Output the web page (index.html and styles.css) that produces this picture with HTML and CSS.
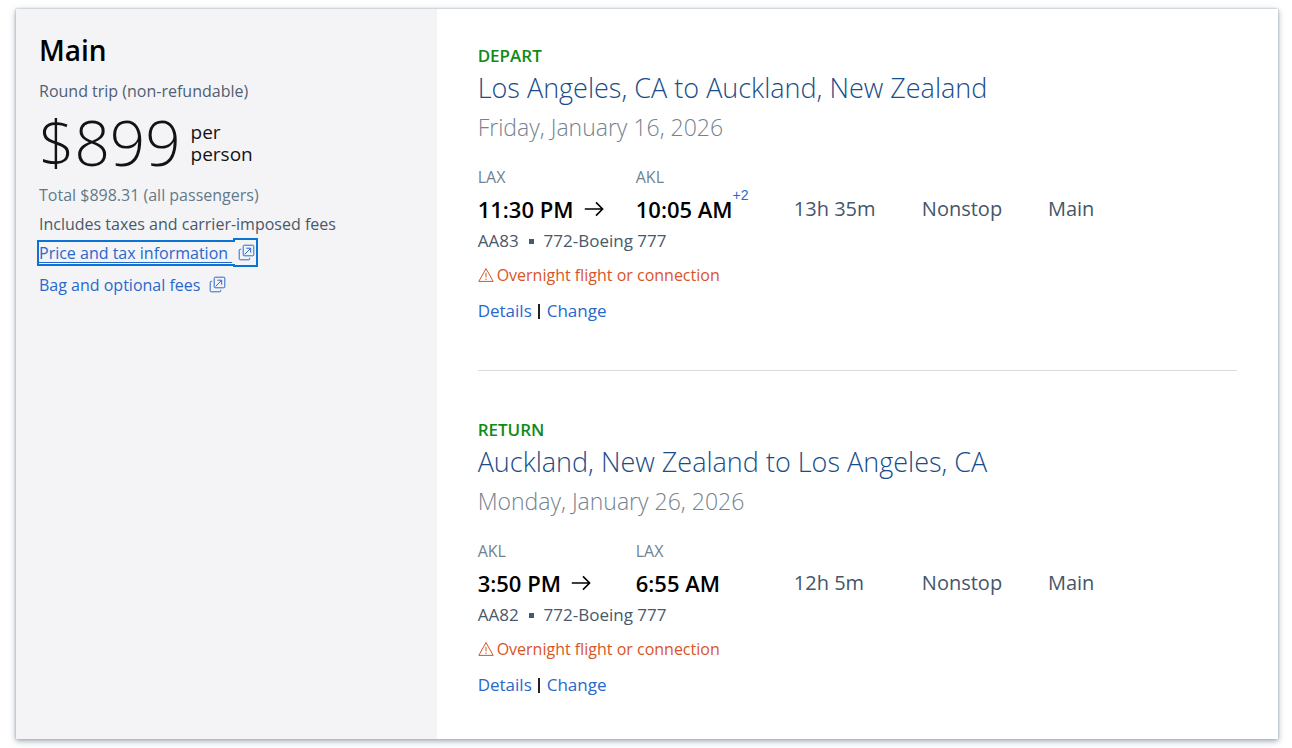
FILE: index.html
```html
<!DOCTYPE html>
<html lang="en">
<head>
<meta charset="utf-8">
<meta name="viewport" content="width=device-width, initial-scale=1">
<title>Trip summary</title>
<link rel="stylesheet" href="styles.css">
</head>
<body>
<svg class="sprite" aria-hidden="true">
  <symbol id="popup" viewBox="0 0 17 17">
    <path d="M6.2 1.2h8.6a1 1 0 0 1 1 1v8.6a1 1 0 0 1-1 1H6.2a1 1 0 0 1-1-1V2.2a1 1 0 0 1 1-1M3.2 5.3H2.2a1 1 0 0 0-1 1v8.5a1 1 0 0 0 1 1h8.5a1 1 0 0 0 1-1v-1M6.6 10.4l6-6M8.3 4.2h4.4v4.5"/>
  </symbol>
  <symbol id="warning" viewBox="0 0 16 16">
    <path d="M8 1.6 15.2 14.4H.8zM8 5.8v4.6M8 11.6v1.4"/>
  </symbol>
  <symbol id="arrow" viewBox="0 0 20 16">
    <path d="M.8 8h17.8M12 1.4 18.6 8 12 14.6"/>
  </symbol>
</svg>
<main class="card">
  <aside class="fare">
    <h1 class="fare-name">Main</h1>
    <p class="fare-type">Round trip (non-refundable)</p>
    <p class="price"><span class="amount">$899</span><span class="unit">per<br>person</span></p>
    <p class="total">Total $898.31 (all passengers)</p>
    <p class="note">Includes taxes and carrier-imposed fees</p>
    <p class="info"><a class="link focused" href="#price"><span class="link-text">Price and tax information&nbsp;</span><svg class="popup"><use href="#popup"/></svg></a></p>
    <p class="info last"><a class="link" href="#bags">Bag and optional fees <svg class="popup"><use href="#popup"/></svg></a></p>
  </aside>
  <div class="slices">
    <section class="slice">
      <p class="direction">DEPART</p>
      <h2 class="route">Los Angeles, CA to Auckland, New Zealand</h2>
      <p class="date">Friday, January 16, 2026</p>
      <div class="flight">
        <div><p class="code">LAX</p><p class="time">11:30 PM<svg class="arrow"><use href="#arrow"/></svg></p></div>
        <div><p class="code">AKL</p><p class="time">10:05 AM<a class="days" href="#days">+2</a></p></div>
        <p class="fact">13h 35m</p>
        <p class="fact">Nonstop</p>
        <p class="fact">Main</p>
      </div>
      <p class="plane">AA83<span class="dot"></span>772-Boeing 777</p>
      <p class="alert"><svg class="warning"><use href="#warning"/></svg>Overnight flight or connection</p>
      <p class="actions"><a class="link" href="#details-1">Details</a><span class="bar"></span><a class="link" href="#change-1">Change</a></p>
    </section>
    <section class="slice">
      <p class="direction">RETURN</p>
      <h2 class="route">Auckland, New Zealand to Los Angeles, CA</h2>
      <p class="date">Monday, January 26, 2026</p>
      <div class="flight">
        <div><p class="code">AKL</p><p class="time">3:50 PM<svg class="arrow"><use href="#arrow"/></svg></p></div>
        <div><p class="code">LAX</p><p class="time">6:55 AM</p></div>
        <p class="fact">12h 5m</p>
        <p class="fact">Nonstop</p>
        <p class="fact">Main</p>
      </div>
      <p class="plane">AA82<span class="dot"></span>772-Boeing 777</p>
      <p class="alert"><svg class="warning"><use href="#warning"/></svg>Overnight flight or connection</p>
      <p class="actions"><a class="link" href="#details-2">Details</a><span class="bar"></span><a class="link" href="#change-2">Change</a></p>
    </section>
  </div>
</main>
</body>
</html>
```
FILE: styles.css
```css
* { box-sizing: border-box; }
body {
  margin: 0;
  padding: 9px 14px 9px 16px;
  background: #fff;
  color: #131313;
  font: 16px/22px "Open Sans", "Noto Sans", sans-serif;
}
p, h1, h2 { margin: 0; }
.sprite { position: absolute; width: 0; height: 0; }
svg { fill: none; stroke: currentColor; }

.card {
  display: grid;
  grid-template-columns: 1fr 2fr;
  box-shadow: 0 0 2px #9daebb, 0 2px 6px rgba(60, 80, 100, .5);
}
.fare { padding: 23px; background: #f4f4f7; }
.fare-name { color: #000; font-size: 28px; line-height: 36px; font-weight: 600; }
.fare-type { margin-top: 12px; color: #4e6072; }
.price { display: flex; align-items: center; gap: 10px; margin-top: 10px; }
.amount { font-size: 62px; line-height: 60px; font-weight: 300; }
.unit { padding-top: 2px; font-size: 19px; line-height: 22px; }
.total { margin-top: 12px; color: #627a88; }
.note { margin-top: 7px; color: #48596a; }
.info { height: 22px; margin-top: 5px; }
.last { margin-top: 12px; }
.link { color: #2868cc; text-decoration: none; }
.link-text { text-decoration: underline; text-underline-offset: 3px; }
.focused { outline: 2px solid #0a74d4; }
.popup { width: 17px; height: 17px; margin-left: 4px; vertical-align: -2px; }
.focused .popup { width: 21px; height: 25px; margin-left: 3px; padding: 4px 1px 4px 3px; vertical-align: -6px; }

.slices { padding: 0 41px; }
.slice { padding: 35px 0 43px; }
.slice + .slice { padding-top: 47px; border-top: 1px solid #d8dce0; }
.slice:first-child { padding-bottom: 48px; }
.direction { color: #108a18; font-size: 17px; line-height: 24px; font-weight: 600; }
.route { color: #194d87; font-size: 27px; line-height: 40px; font-weight: 300; }
.date { color: #74838f; font-size: 23px; line-height: 38px; font-weight: 300; }
.flight {
  display: grid;
  grid-template-columns: 158fr 158fr 128fr 126fr 189fr;
  align-items: end;
  margin-top: 20px;
}
.code { color: #708390; }
.time { display: flex; align-items: center; color: #000; font-size: 22px; line-height: 42px; font-weight: 600; }
.arrow { width: 20px; height: 16px; margin-left: 10px; stroke-width: 1.6; }
.days { align-self: flex-start; color: #2868cc; font: 14px/14px "Liberation Sans", sans-serif; text-decoration: none; }
.fact { color: #44566a; font-size: 20px; line-height: 42px; }
.plane { display: flex; align-items: center; color: #48596a; font-size: 17px; }
.dot { width: 5px; height: 5px; margin: 0 10px; background: #48596a; }
.alert { display: flex; align-items: center; gap: 3px; margin-top: 12px; color: #d95427; }
.warning { width: 16px; height: 16px; }
.actions { display: flex; align-items: center; margin-top: 14px; font-size: 17px; }
.bar { width: 2px; height: 15px; margin: 0 7px 0 6px; background: #222; }
```
